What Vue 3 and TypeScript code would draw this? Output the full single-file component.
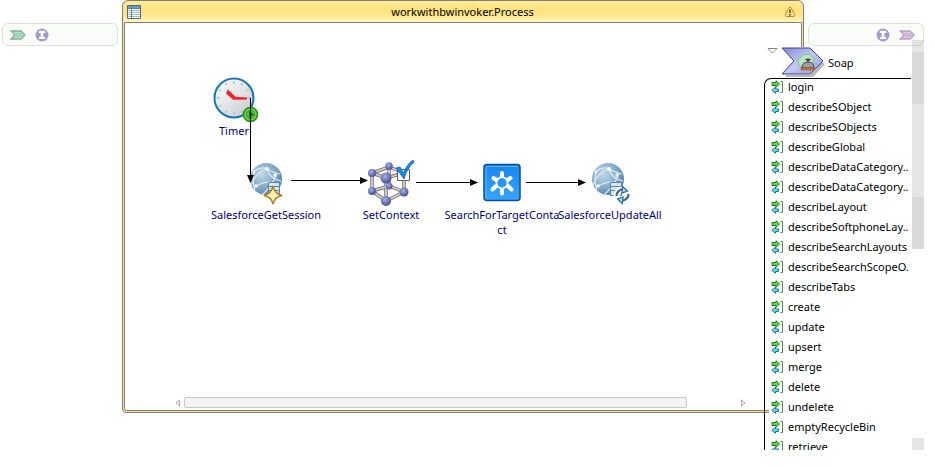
<script setup lang="ts">
interface ProcessNode {
  id: string
  label: string
  kind: 'timer' | 'session' | 'context' | 'search' | 'update'
  x: number
  y: number
}

const nodes: ProcessNode[] = [
  { id: 'timer', label: 'Timer', kind: 'timer', x: 109, y: 52 },
  { id: 'session', label: 'SalesforceGetSession', kind: 'session', x: 141, y: 136 },
  { id: 'context', label: 'SetContext', kind: 'context', x: 266, y: 136 },
  { id: 'search', label: 'SearchForTargetConta\nct', kind: 'search', x: 377, y: 136 },
  { id: 'update', label: 'SalesforceUpdateAll', kind: 'update', x: 485, y: 136 },
]

const operations: string[] = [
  'login',
  'describeSObject',
  'describeSObjects',
  'describeGlobal',
  'describeDataCategory..',
  'describeDataCategory..',
  'describeLayout',
  'describeSoftphoneLay..',
  'describeSearchLayouts',
  'describeSearchScopeO.',
  'describeTabs',
  'create',
  'update',
  'upsert',
  'merge',
  'delete',
  'undelete',
  'emptyRecycleBin',
  'retrieve',
]
</script>

<template>
  <main class="editor">
    <svg class="defs" width="0" height="0" aria-hidden="true">
      <defs>
        <radialGradient id="globe" cx="0.35" cy="0.35" r="0.75">
          <stop offset="0" stop-color="#c3d9e8" />
          <stop offset="0.55" stop-color="#84abc8" />
          <stop offset="1" stop-color="#4d7da3" />
        </radialGradient>
        <radialGradient id="ball" cx="0.4" cy="0.35" r="0.65">
          <stop offset="0" stop-color="#a9b2e6" />
          <stop offset="1" stop-color="#454f94" />
        </radialGradient>
        <linearGradient id="face" x1="0" y1="0" x2="1" y2="1">
          <stop offset="0" stop-color="#ffffff" />
          <stop offset="1" stop-color="#c4c8cb" />
        </linearGradient>
        <linearGradient id="tile" x1="0" y1="0" x2="0" y2="1">
          <stop offset="0" stop-color="#1686f0" />
          <stop offset="1" stop-color="#36a5ff" />
        </linearGradient>
        <linearGradient id="service" x1="0" y1="0" x2="1" y2="1">
          <stop offset="0" stop-color="#8288d8" />
          <stop offset="0.5" stop-color="#c3c8f4" />
          <stop offset="1" stop-color="#9299dc" />
        </linearGradient>
        <symbol id="info" viewBox="0 0 14 14">
          <circle cx="7" cy="7" r="6.500" fill="#a59ace" />
          <path d="M2 5a5.500 5 0 0 1 10 0z" fill="#bcb4dd" />
          <path d="M4 3h6v2H8.300v4H10v2H4V9h1.700V5H4z" fill="#fff" />
        </symbol>
        <symbol id="globe-shape" viewBox="0 0 48 48">
          <circle cx="24" cy="20" r="16" fill="url(#globe)" />
          <g fill="none" stroke="#dceaf3" stroke-width="1.200">
            <path d="M12 12Q20 7 25 10T38 15M9 26Q15 12 25 10Q28 20 39 22M13 31Q10 24 12 12M20 36Q30 27 35 15M14 27Q29 19 38 28" />
          </g>
          <g fill="#f7fbfd"><circle cx="25" cy="10" r="2" /><circle cx="14" cy="27" r="1.800" /><circle cx="33" cy="16" r="1.700" /><circle cx="12" cy="13" r="1.200" /></g>
          <g fill="#d9e5ee" stroke="#5485a9"><path d="M26.500 23.500h11v13h-11zM26.500 27.500h11M26.500 31.500h11" /></g>
        </symbol>
      </defs>
    </svg>

    <aside class="rail" aria-label="Process inputs">
      <svg width="16" height="10" viewBox="0 0 16 10"><path d="M1 1h10l4 4-4 4H1l3-2.500v-3z" fill="#b5e3cd" stroke="#7fae99" stroke-width="1.400" /><path d="M5 3h6l2 2-2 2H5z" fill="#9bd7b6" /></svg>
      <svg width="14" height="14"><use href="#info" /></svg>
    </aside>

    <section class="process">
      <header class="titlebar">
        <svg width="14" height="14" viewBox="0 0 14 14">
          <path d="M.5.5h13v13H.5z" fill="#fff" stroke="#5d6670" />
          <path d="M1 1h12v2H1z" fill="#4fa5dc" />
          <path d="M1 5.500h12M1 7.500h12M1 9.500h12M1 11.500h12" stroke="#9dbbd2" />
          <path d="M1 3.500h12M4.500 1v12" stroke="#5d7f99" />
        </svg>
        <h1>workwithbwinvoker.Process</h1>
        <svg width="12" height="12" viewBox="0 0 12 12">
          <path d="M6 1.200Q7 1.200 8 3.500L10.500 8Q11.500 10.500 9.500 10.500h-7Q.5 10.500 1.500 8L4 3.500Q5 1.200 6 1.200z" fill="#ffdf8b" stroke="#cf8428" />
          <path d="M5.200 3.500h1.600v3.500H5.200zM5.200 8h1.600v1.500H5.200z" fill="#7b4614" />
        </svg>
      </header>
      <div class="body">
        <div class="canvas">
          <figure v-for="n in nodes" :key="n.id" class="node" :style="{ left: n.x + 'px', top: n.y + 'px' }">
            <svg width="48" height="48" viewBox="0 0 48 48" aria-hidden="true">
              <template v-if="n.kind === 'timer'">
                <circle cx="24" cy="23" r="19.500" fill="url(#face)" stroke="#1674b8" stroke-width="2" />
                <g stroke="#9dbfd7" stroke-width="1.400">
                  <path d="M24 6v3M24 37v3M7 23h3M38 23h3M15.500 8.300l1 1.800M32.500 8.300l-1 1.800M9.300 14.500l1.800 1M38.700 14.500l-1.800 1M9.300 31.500l1.800-1M15.500 37.700l1-1.800M32.500 37.700l-1-1.800" />
                </g>
                <path d="M18 14.500l7.500 7.200 11.500.8v2l-14 .2-7-6.500z" fill="#ef2229" />
                <circle cx="40.500" cy="39.500" r="7" fill="#5fe03a" stroke="#27851a" stroke-width="1.500" />
                <circle cx="40.500" cy="39.500" r="4.200" fill="#4fc92f" stroke="#2f9a22" />
                <path d="M39 36l5 3.500-5 3.500z" fill="#1b6415" />
              </template>
              <template v-else-if="n.kind === 'session'">
                <use href="#globe-shape" />
                <path d="M31 27q1.500 7.500 9 9.500-7.500 1.500-9 8.500-1.500-7-9-8.500 7.500-2 9-9.500z" fill="#fff0b8" stroke="#b17d22" stroke-width="1.500" />
              </template>
              <template v-else-if="n.kind === 'context'">
                <g fill="none" stroke="#77716f" stroke-width="3.500"><path d="M5 14L22 8l15 6v19L19 42 5 32zM5 14l14 5 18-5M19 19v23M22 8v19M5 32l17-5 15 6" /></g>
                <g fill="none" stroke="#d5cfcd" stroke-width="1.800"><path d="M5 14L22 8l15 6v19L19 42 5 32zM5 14l14 5 18-5M19 19v23M22 8v19M5 32l17-5 15 6" /></g>
                <g fill="url(#ball)"><circle cx="22" cy="27" r="3.500" /><circle cx="5" cy="14" r="4" /><circle cx="22" cy="7" r="3.800" /><circle cx="5" cy="32" r="4" /><circle cx="37" cy="33" r="4.500" /><circle cx="19" cy="19" r="5.500" /><circle cx="19" cy="42" r="5" /></g>
                <path d="M30.500 10.500h12v11h-12z" fill="#fff" stroke="#625d5b" />
                <path d="M29 9l4-1 3.500 6Q40 5 46 1l1 2Q40 9 37 20z" fill="#168be8" stroke="#125fac" stroke-width=".8" />
              </template>
              <template v-else-if="n.kind === 'search'">
                <rect x="6" y="5.500" width="36" height="36" rx="3" fill="url(#tile)" stroke="#0b4d98" stroke-width="1.500" />
                <path d="M8 39.500V8.500q0-1 1-1h31" fill="none" stroke="#65b7f8" />
                <path d="M24 17.500l5.500 3v6.500L24 30l-5.500-3v-6.500z" fill="none" stroke="#fff" stroke-width="1.800" />
                <path d="M24 14v3.500M32.500 19l-3 2M15.500 19l3 2M24 30.500v4M30 27l3.500 3.500M18 27l-3.500 3.500" stroke="#fff" stroke-width="4" stroke-linecap="round" />
              </template>
              <template v-else>
                <use href="#globe-shape" x="-2" />
                <circle cx="36" cy="36" r="5.500" fill="none" stroke="#fff" stroke-width="6" />
                <g fill="none" stroke="#286996" stroke-width="2"><path d="M30.500 37a6 6 0 0 1 8-6M42.500 35a6 6 0 0 1-8 6" /></g>
                <path d="M36.500 27.500l5 4.500-5.500 2zM36.500 44.500l-5-4.500 5.500-2z" fill="#b9dbed" stroke="#286996" stroke-width="1.200" />
              </template>
            </svg>
            <figcaption>{{ n.label }}</figcaption>
          </figure>
          <svg class="links" width="480" height="200" viewBox="0 0 480 200" aria-hidden="true">
            <g stroke="#000" shape-rendering="crispEdges"><path d="M125.500 75v77M166 157.500h70M291 159.500h55M401 159.500h52" /></g>
            <path d="M122 152h7l-3.500 8zM235 154v7l8-3.500zM345 156v7l8-3.500zM453 156v7l8-3.500z" />
          </svg>
        </div>
        <div class="hscroll" aria-hidden="true">
          <svg width="6" height="8" viewBox="0 0 6 8"><path d="M4.500 1v6L1 4z" fill="#f7f7f7" stroke="#a9a9a9" /></svg>
          <div class="track"><div class="thumb"></div></div>
          <svg width="6" height="8" viewBox="0 0 6 8"><path d="M1.500 1v6L5 4z" fill="#f7f7f7" stroke="#a9a9a9" /></svg>
        </div>
      </div>
    </section>

    <aside class="rail end" aria-label="Process outputs">
      <svg width="14" height="14"><use href="#info" /></svg>
      <svg width="16" height="10" viewBox="0 0 16 10"><path d="M1 1h10l4 4-4 4H1l3-2.500v-3z" fill="#dccae3" stroke="#b9a1c3" stroke-width="1.400" /><path d="M5 3h6l2 2-2 2H5z" fill="#cfb6da" /></svg>
    </aside>

    <section class="service">
      <header class="service-head">
        <svg class="toggle" width="11" height="6" viewBox="0 0 11 6"><path d="M1 .5h9L5.500 5z" fill="#fff" stroke="#888" /></svg>
        <svg width="46" height="31" viewBox="0 0 46 31" aria-hidden="true">
          <path d="M6 30h27l12-13-3-2-12 13H6z" fill="#b7b7b7" />
          <path d="M2 1h28l13 13-13 13H2l12-13z" fill="url(#service)" stroke="#3c4388" />
          <path d="M18 13l5-5 6-1 5 4-1 8-6 3-8-3z" fill="#b8e5c2" stroke="#83bf91" />
          <path d="M22 21q0-6 6-6t6 6z" fill="#9ca2a4" stroke="#444" /><path d="M28 12v3M25.500 12.500h5" stroke="#333" stroke-width="1.500" />
          <path d="M21 21h13v2H21z" fill="#d77c2f" stroke="#844313" stroke-width=".5" />
        </svg>
        <h2>Soap</h2>
      </header>
      <ul class="operations">
        <li v-for="(op, i) in operations" :key="i">
          <svg width="13" height="14" viewBox="0 0 13 14" aria-hidden="true">
            <path d="M1 2.500h4V.7L8.500 4 5 7.300V5.500H1z" fill="#59d83c" stroke="#257e28" />
            <path d="M7.500 9v2.500H4.500v1.800L.8 10.200l3.700-3V9z" fill="#6de0ed" stroke="#167b91" />
            <path d="M9.500 1.500h2v11h-2" fill="none" stroke="#3f9148" />
          </svg>
          <span>{{ op }}</span>
        </li>
      </ul>
    </section>

    <div class="vscroll" aria-hidden="true">
      <i class="step"></i><i class="bar"></i><i class="gap"></i><i class="bar"></i>
      <i class="step last"></i>
    </div>
  </main>
</template>

<style>
body { margin: 0; background: #fff; }
</style>

<style scoped>
.editor {
  position: relative;
  display: grid;
  grid-template-columns: 116px minmax(0, 1fr) 116px;
  column-gap: 4px;
  align-items: start;
  height: 450px;
  padding: 0 11px 0 2px;
  box-sizing: border-box;
  overflow: hidden;
  font: 11px/15px "Noto Sans", "Open Sans", sans-serif;
  color: #000;
}
.defs { position: absolute; }
svg { display: block; flex: none; }
h1, h2, ul, figure { margin: 0; padding: 0; font: inherit; }
.rail {
  grid-row: 1;
  display: flex;
  align-items: center;
  gap: 9px;
  box-sizing: border-box;
  height: 23px;
  margin-top: 23px;
  padding: 0 8px 0 7px;
  border: 1px solid #dfe1df;
  border-radius: 6px;
  background: #fafcf8;
}
.rail:first-of-type { grid-column: 1; }
.rail.end { grid-column: 3; justify-content: flex-end; }
.process {
  grid-column: 2;
  grid-row: 1;
  padding: 0 1px 1px;
  border: 1px solid #808080;
  border-radius: 6px 6px 4px 4px;
  background: #ffe38a;
}
.titlebar {
  display: flex;
  align-items: center;
  height: 21px;
  padding: 0 6px 0 3px;
  border-radius: 5px 5px 0 0;
  background: linear-gradient(#ffea96 0, #ffe37c 45%, #ffe58c 65%, #fff8b8 100%);
}
.titlebar h1 { flex: 1; text-align: center; }
.body {
  display: flex;
  flex-direction: column;
  border: 1px solid #808080;
  border-radius: 0 0 3px 3px;
  background: #fff;
}
.canvas { position: relative; height: 374px; }
.node {
  position: absolute;
  display: flex;
  flex-direction: column;
  align-items: center;
  width: 120px;
  margin-left: -60px;
}
.node figcaption {
  color: #00007c;
  text-align: center;
  white-space: pre;
}
.links { position: absolute; left: 0; top: 0; }
.hscroll {
  display: flex;
  align-items: center;
  gap: 3px;
  margin: 0 55px 2px 50px;
}
.track { flex: 1; }
.thumb {
  box-sizing: border-box;
  width: 91%;
  height: 11px;
  border: 1px solid #c9c9c9;
  border-radius: 2px;
  background: #f3f3f3;
}
.service {
  position: absolute;
  top: 47px;
  right: 24px;
  width: 147px;
  line-height: 16px;
  background: linear-gradient(#fff, #fff) 5px 0 no-repeat;
  overflow: hidden;
}
.service-head {
  display: flex;
  align-items: center;
  gap: 2px;
  height: 31px;
  padding-left: 3px;
}
.toggle { align-self: flex-start; margin-top: 1px; }
.operations {
  list-style: none;
  border: solid #000;
  border-width: 1px 0 0 1px;
  border-top-left-radius: 7px;
}
.operations li {
  display: flex;
  align-items: center;
  gap: 4px;
  height: 20px;
  padding-left: 6px;
  white-space: nowrap;
}
.operations li:first-child { margin-top: -2px; }
.vscroll {
  position: absolute;
  top: 40px;
  right: 11px;
  bottom: 0;
  display: flex;
  flex-direction: column;
  width: 12px;
}
.step { height: 12px; background: rgb(0 0 0 / 10%); }
.bar { height: 52px; background: rgb(0 0 0 / 15%); }
.gap { height: 93px; background: rgb(0 0 0 / 10%); }
.last { margin-top: auto; }
</style>
